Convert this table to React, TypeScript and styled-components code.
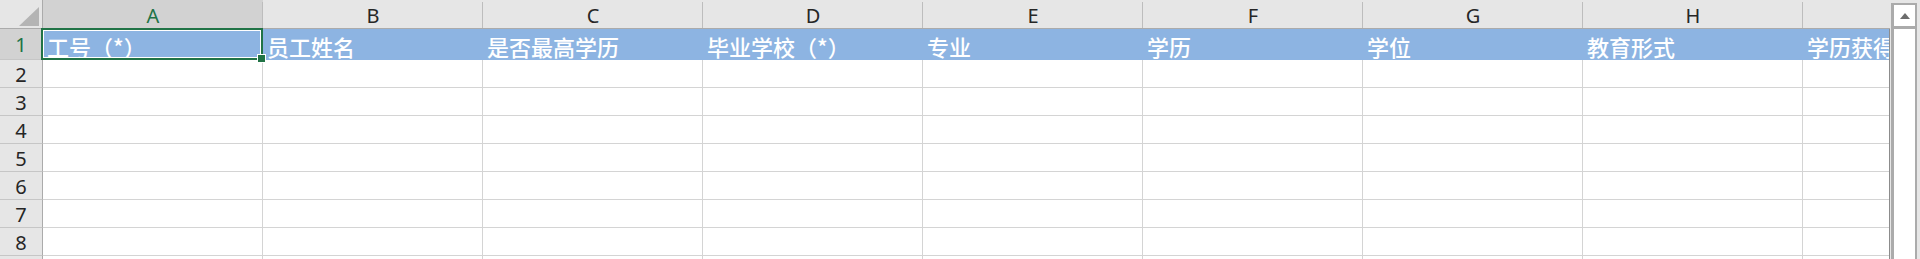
import React from "react";
import styled, { createGlobalStyle } from "styled-components";

const GlobalStyle = createGlobalStyle`
  html, body {
    margin: 0;
    padding: 0;
    background: #ffffff;
    overflow: hidden;
  }
`;

const COLUMNS = ["A", "B", "C", "D", "E", "F", "G", "H", "I"];
const TITLES = [
  "工号（*）",
  "员工姓名",
  "是否最高学历",
  "毕业学校（*）",
  "专业",
  "学历",
  "学位",
  "教育形式",
  "学历获得",
];
const ROWS = [2, 3, 4, 5, 6, 7, 8, 9];
// the last column sits under the scrollbar, so its letter is never in view
const VISIBLE_LETTERS = 8;

const Sheet = styled.div`
  display: flex;
  height: 259px;
  overflow: hidden;
  background: #e6e6e6;
`;

const GridArea = styled.div`
  position: relative;
  width: 1890px;
  flex-shrink: 0;
  display: flex;
  flex-direction: column;
  overflow: hidden;
`;

const HeaderRow = styled.div`
  display: flex;
  height: 29px;
  background: #e6e6e6;
  border-bottom: 1px solid #ababab;
  box-sizing: border-box;
`;

const Corner = styled.div`
  width: 43px;
  flex-shrink: 0;
  box-sizing: border-box;
  border-right: 1px solid #ababab;
  display: flex;
  align-items: flex-end;
  justify-content: flex-end;
  padding: 0 3px 2px 0;
`;

const CornerTriangle = styled.div`
  width: 0;
  height: 0;
  border-left: 20px solid transparent;
  border-bottom: 19px solid #b4b4b4;
`;

const ColHeader = styled.div<{ $selected?: boolean }>`
  position: relative;
  width: 220px;
  flex-shrink: 0;
  box-sizing: border-box;
  padding-top: 4px;
  text-align: center;
  font-family: "Noto Sans", "Liberation Sans", sans-serif;
  font-size: 20px;
  line-height: 24px;
  color: ${(p) => (p.$selected ? "#217346" : "#262626")};
  background: ${(p) => (p.$selected ? "#d2d2d2" : "#e6e6e6")};

  &::after {
    content: "";
    position: absolute;
    right: 0;
    top: 2px;
    bottom: 0;
    width: 1px;
    background: #bdbdbd;
  }
`;

const Body = styled.div`
  flex: 1;
  overflow: hidden;
  border-right: 1px solid #8c8c8c;
  background: #ffffff;
`;

const Row = styled.div<{ $height: number }>`
  display: flex;
  height: ${(p) => p.$height}px;
`;

const RowHeader = styled.div<{ $selected?: boolean; $pad: number }>`
  width: 43px;
  flex-shrink: 0;
  box-sizing: border-box;
  padding-top: ${(p) => p.$pad}px;
  text-align: center;
  border-right: 1px solid #ababab;
  border-bottom: 1px solid #c6c6c6;
  font-family: "Noto Sans", "Liberation Sans", sans-serif;
  font-size: 20px;
  line-height: 24px;
  color: ${(p) => (p.$selected ? "#217346" : "#262626")};
  background: ${(p) => (p.$selected ? "#d2d2d2" : "#e6e6e6")};
`;

const Cell = styled.div<{ $fill?: string }>`
  width: 220px;
  flex-shrink: 0;
  box-sizing: border-box;
  white-space: nowrap;
  padding: 4px 0 0 4px;
  background: ${(p) => p.$fill ?? "#ffffff"};
  border-right: 1px solid ${(p) => p.$fill ?? "#d4d4d4"};
  border-bottom: 1px solid ${(p) => p.$fill ?? "#d4d4d4"};
  font-family: "Noto Sans CJK SC", "Noto Sans", sans-serif;
  font-size: 22px;
  font-weight: 500;
  line-height: 26px;
  color: #ffffff;
`;

// active cell outline on A1 plus the fill handle
const Selection = styled.div`
  position: absolute;
  left: 41px;
  top: 28px;
  width: 222px;
  height: 32px;
  box-sizing: border-box;
  border: 2px solid #217346;
  box-shadow: inset 0 0 0 1px #ffffff;
  pointer-events: none;
`;

const FillHandle = styled.div`
  position: absolute;
  left: 257px;
  top: 54px;
  width: 7px;
  height: 7px;
  background: #217346;
  border: 1px solid #ffffff;
`;

const Scrollbar = styled.div`
  width: 30px;
  flex-shrink: 0;
  box-sizing: border-box;
  padding: 3px 3px 0 1px;
  display: flex;
`;

const Track = styled.div`
  flex: 1;
  display: flex;
  flex-direction: column;
  background: #ffffff;
  border: 2px solid #ababab;
  border-bottom: none;
  border-left-width: 3px;
`;

const ArrowButton = styled.div`
  height: 21px;
  display: flex;
  align-items: center;
  justify-content: center;
  border-bottom: 3px solid #ababab;
`;

const ArrowUp = styled.div`
  width: 0;
  height: 0;
  border-left: 5px solid transparent;
  border-right: 5px solid transparent;
  border-bottom: 6px solid #6d6d6d;
`;

export default function App() {
  return (
    <>
      <GlobalStyle />
      <Sheet>
        <GridArea>
          <HeaderRow>
            <Corner>
              <CornerTriangle />
            </Corner>
            {COLUMNS.map((c, i) => (
              <ColHeader key={c} $selected={i === 0}>
                {i < VISIBLE_LETTERS ? c : ""}
              </ColHeader>
            ))}
          </HeaderRow>
          <Body>
            <Row $height={31}>
              <RowHeader $selected $pad={4}>
                1
              </RowHeader>
              {TITLES.map((t) => (
                <Cell key={t} $fill="#8db4e2">
                  {t}
                </Cell>
              ))}
            </Row>
            {ROWS.map((r) => (
              <Row key={r} $height={28}>
                <RowHeader $pad={3}>{r}</RowHeader>
                {COLUMNS.map((c) => (
                  <Cell key={c} />
                ))}
              </Row>
            ))}
          </Body>
          <Selection />
          <FillHandle />
        </GridArea>
        <Scrollbar>
          <Track>
            <ArrowButton>
              <ArrowUp />
            </ArrowButton>
          </Track>
        </Scrollbar>
      </Sheet>
    </>
  );
}
